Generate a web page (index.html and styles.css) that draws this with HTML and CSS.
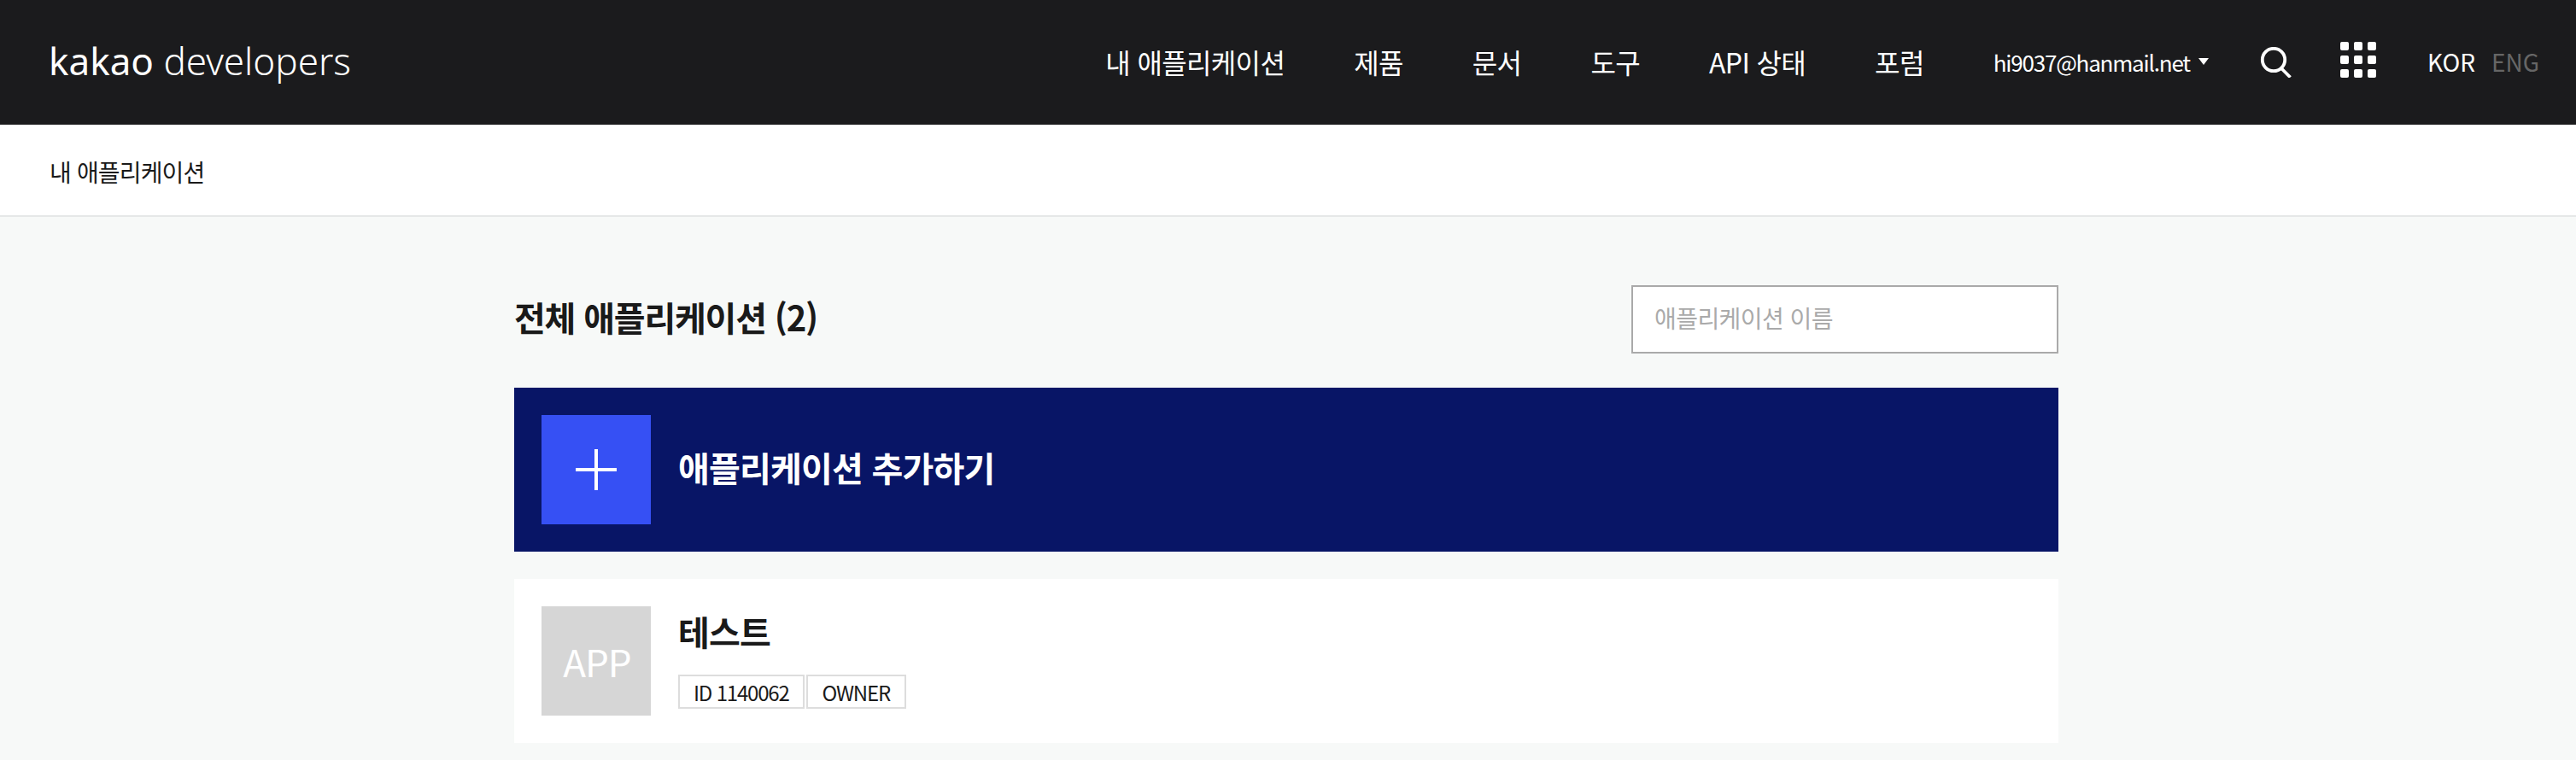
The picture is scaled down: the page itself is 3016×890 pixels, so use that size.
FILE: index.html
```html
<!DOCTYPE html>
<html lang="ko">
<head>
  <meta charset="utf-8">
  <title>kakao developers</title>
  <link rel="stylesheet" href="styles.css">
</head>
<body>
  <header class="top">
    <a class="logo"><span class="logo-kakao">kakao</span> developers</a>
    <nav class="nav">
      <a>내 애플리케이션</a>
      <a>제품</a>
      <a>문서</a>
      <a>도구</a>
      <a>API 상태</a>
      <a>포럼</a>
    </nav>
    <div class="user">hi9037@hanmail.net<span class="caret"></span></div>
    <svg class="ico-search" width="37" height="36" viewBox="0 0 37 36">
      <circle cx="16" cy="15" r="13.2" fill="none" stroke="#fff" stroke-width="3.8"/>
      <path d="M25 25 L35.5 35.5" fill="none" stroke="#fff" stroke-width="3.8"/>
    </svg>
    <svg class="ico-grid" width="42" height="42" viewBox="0 0 42 42" fill="#fff">
      <rect x="0" y="0" width="10" height="10" rx="2"/>
      <rect x="16" y="0" width="10" height="10" rx="2"/>
      <rect x="32" y="0" width="10" height="10" rx="2"/>
      <rect x="0" y="16" width="10" height="10" rx="2"/>
      <rect x="16" y="16" width="10" height="10" rx="2"/>
      <rect x="32" y="16" width="10" height="10" rx="2"/>
      <rect x="0" y="32" width="10" height="10" rx="2"/>
      <rect x="16" y="32" width="10" height="10" rx="2"/>
      <rect x="32" y="32" width="10" height="10" rx="2"/>
    </svg>
    <div class="lang"><span>KOR</span><span class="off">ENG</span></div>
  </header>

  <div class="sub">내 애플리케이션</div>

  <main class="wrap">
    <div class="title-row">
      <h1>전체 애플리케이션 (2)</h1>
      <input class="search" type="text" placeholder="애플리케이션 이름">
    </div>

    <a class="row row-add">
      <span class="thumb thumb-add">
        <svg width="48" height="48" viewBox="0 0 48 48" fill="#fff">
          <rect x="22" y="0" width="4" height="48"/>
          <rect x="0" y="22" width="48" height="4"/>
        </svg>
      </span>
      <strong class="add-text">애플리케이션 추가하기</strong>
    </a>

    <a class="row">
      <span class="thumb">APP</span>
      <div class="info">
        <strong class="app-name">테스트</strong>
        <div class="tags">
          <span class="tag">ID 1140062</span>
          <span class="tag">OWNER</span>
        </div>
      </div>
    </a>
  </main>
</body>
</html>
```

FILE: styles.css
```css
* {box-sizing: border-box;}

body {
  margin: 0;
  height: 890px;
  overflow: hidden;
  background-color: #f7f9f8;
  color: #1a1a1a;
  font-family: "Noto Sans CJK KR", "Noto Sans", sans-serif;
}

/* top bar */
.top {
  display: flex;
  align-items: center;
  height: 146px;
  padding: 0 43px 0 57px;
  background-color: #1b1b1d;
  color: #fff;
}
.logo {
  padding-bottom: 4px;
  font: 300 44px "Noto Sans", sans-serif;
}
.logo-kakao {
  font-weight: 400;
}
.nav {
  display: flex;
  gap: 81px;
  margin-left: auto;
  padding-bottom: 3px;
  font-size: 32px;
  letter-spacing: -0.02em;
}
.user {
  display: flex;
  align-items: center;
  margin-left: 81px;
  padding-bottom: 2px;
  font-size: 26px;
  letter-spacing: -1.2px;
}
.caret {
  width: 0;
  height: 0;
  margin-left: 10px;
  border-left: 6px solid transparent;
  border-right: 6px solid transparent;
  border-top: 8px solid #fff;
}
.ico-search {
  margin-left: 60px;
}
.ico-grid {
  margin-left: 57px;
  margin-top: -6px;
}
.lang {
  display: flex;
  gap: 19px;
  margin-left: 60px;
  padding-bottom: 2px;
  font-size: 28px;
}
.off {
  color: #666;
}

/* breadcrumb */
.sub {
  display: flex;
  align-items: center;
  height: 108px;
  padding: 3px 58px 0;
  border-bottom: 2px solid #e6e8e8;
  background-color: #fff;
  font-size: 28px;
  letter-spacing: -0.03em;
}

/* content */
.wrap {
  width: 1808px;
  margin-left: 602px;
}
.title-row {
  display: flex;
  justify-content: space-between;
  align-items: center;
  padding: 80px 0 40px;
}
h1 {
  margin: 0;
  padding-bottom: 6px;
  font-size: 40px;
  font-weight: 600;
  letter-spacing: -0.03em;
}
.search {
  width: 500px;
  height: 80px;
  padding: 0 25px 4px;
  border: 2px solid #aaa;
  border-radius: 0;
  background-color: #fff;
  font: 28px "Noto Sans CJK KR", sans-serif;
  letter-spacing: -0.02em;
}
.search::placeholder {
  color: #aaa;
  opacity: 1;
}
.row {
  display: flex;
  align-items: center;
  gap: 32px;
  height: 192px;
  padding: 32px;
  margin-bottom: 32px;
  background-color: #fff;
}
.row-add {
  background-color: #081566;
  color: #fff;
}
.thumb {
  display: flex;
  align-items: center;
  justify-content: center;
  flex: none;
  width: 128px;
  height: 128px;
  padding-left: 2px;
  background-color: #d6d6d6;
  color: #fff;
  font-size: 44px;
  letter-spacing: -1px;
}
.thumb-add {
  padding-left: 0;
  background-color: #3650f4;
}
.add-text {
  padding-bottom: 7px;
  font-size: 40px;
  letter-spacing: -0.02em;
}
.info {
  display: flex;
  flex-direction: column;
  gap: 30px;
}
.app-name {
  font-size: 40px;
  line-height: 42px;
  letter-spacing: -0.02em;
}
.tags {
  display: flex;
  gap: 2px;
}
.tag {
  display: flex;
  align-items: center;
  height: 40px;
  padding: 0 16px;
  border: 2px solid #ddd;
  font-size: 24px;
  letter-spacing: -1.2px;
}
.tag:last-child {
  padding: 0 17px;
}
```
